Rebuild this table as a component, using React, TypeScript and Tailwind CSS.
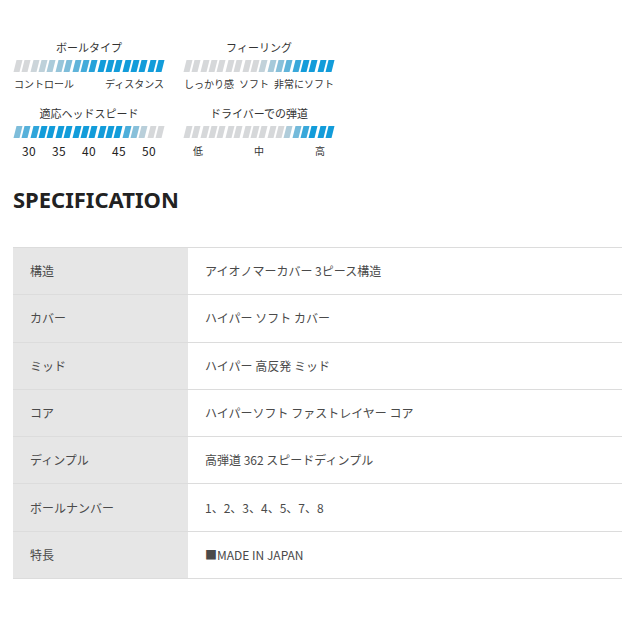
const GRAY = [214, 216, 218]
const BLUE = [18, 156, 218]

const mix = (t: number) => {
  const c = GRAY.map((g, i) => Math.round(g + (BLUE[i] - g) * t))
  return `rgb(${c[0]}, ${c[1]}, ${c[2]})`
}

const ROW = (n: number, v: number) => Array(n).fill(v)

const GAUGES = [
  {
    title: 'ボールタイプ',
    steps: [0, 0, 0.05, 0.12, 0.22, 0.32, 0.45, 0.6, 0.75, 0.9, ...ROW(8, 1)],
    scale: ['コントロール', 'ディスタンス'],
    kind: 'text',
  },
  {
    title: 'フィーリング',
    steps: [...ROW(9, 0), 0.1, 0.25, 0.4, 0.6, 0.8, ...ROW(4, 1)],
    scale: ['しっかり感', 'ソフト', '非常にソフト'],
    kind: 'text',
  },
  {
    title: '適応ヘッドスピード',
    steps: [0.45, 0.65, 0.85, ...ROW(10, 1), 0.7, 0.4, 0.15, 0, 0],
    scale: ['30', '35', '40', '45', '50'],
    kind: 'num',
  },
  {
    title: 'ドライバーでの弾道',
    steps: [...ROW(12, 0), 0.2, 0.5, 0.8, ...ROW(3, 1)],
    scale: ['低', '中', '高'],
    kind: 'kanji',
  },
]

const SPECS = [
  ['構造', 'アイオノマーカバー 3ピース構造'],
  ['カバー', 'ハイパー ソフト カバー'],
  ['ミッド', 'ハイパー 高反発 ミッド'],
  ['コア', 'ハイパーソフト ファストレイヤー コア'],
  ['ディンプル', '高弾道 362 スピードディンプル'],
  ['ボールナンバー', '1、2、3、4、5、7、8'],
  ['特長', '■MADE IN JAPAN'],
]

function Gauge({ g }: { g: (typeof GAUGES)[number] }) {
  return (
    <div className="w-[150px]">
      <p className="text-center text-[11px] leading-[14px] text-[#333]">{g.title}</p>
      <div className="mt-[6px] flex h-[12px] gap-[2.4px] px-[1px]">
        {g.steps.map((t, i) => (
          <div key={i} className="flex-1 -skew-x-[14deg]" style={{ backgroundColor: mix(t) }} />
        ))}
      </div>
      {g.kind === 'text' && (
        <div className="mt-[5px] flex justify-between text-[10px] leading-[13px] text-[#333]">
          {g.scale.map(s => (
            <span key={s}>{s}</span>
          ))}
        </div>
      )}
      {g.kind === 'num' && (
        <div className="mt-[6px] flex justify-between px-[8px] text-[12px] leading-[14px] tracking-wide text-[#222]">
          {g.scale.map(s => (
            <span key={s}>{s}</span>
          ))}
        </div>
      )}
      {g.kind === 'kanji' && (
        <div className="mt-[6px] flex justify-between px-[9px] text-[10px] leading-[14px] text-[#333]">
          {g.scale.map(s => (
            <span key={s}>{s}</span>
          ))}
        </div>
      )}
    </div>
  )
}

export default function App() {
  return (
    <div
      className="min-h-[640px] w-[640px] bg-white"
      style={{ fontFamily: '"Noto Sans CJK JP", "Noto Sans", sans-serif' }}
    >
      <div className="px-[14px] pt-[40px]">
        <div className="grid w-[320px] grid-cols-2 gap-x-[20px] gap-y-[16px]">
          {GAUGES.map(g => (
            <Gauge key={g.title} g={g} />
          ))}
        </div>
      </div>

      <h2
        className="mt-[26px] px-[13px] text-[22px] font-bold leading-[30px] text-[#222]"
        style={{ fontFamily: '"Noto Sans", sans-serif' }}
      >
        SPECIFICATION
      </h2>

      <div className="mx-[13px] mt-[33px] w-[609px] border-t border-[#dcdcdc]">
        {SPECS.map(([k, v]) => (
          <div key={k} className="flex h-[47.3px] border-b border-[#dcdcdc] text-[12px] text-[#4a4a4a]">
            <div className="flex w-[175px] items-center bg-[#e6e6e6] pl-[17px]">{k}</div>
            <div className="flex flex-1 items-center pl-[17px]">{v}</div>
          </div>
        ))}
      </div>
    </div>
  )
}
